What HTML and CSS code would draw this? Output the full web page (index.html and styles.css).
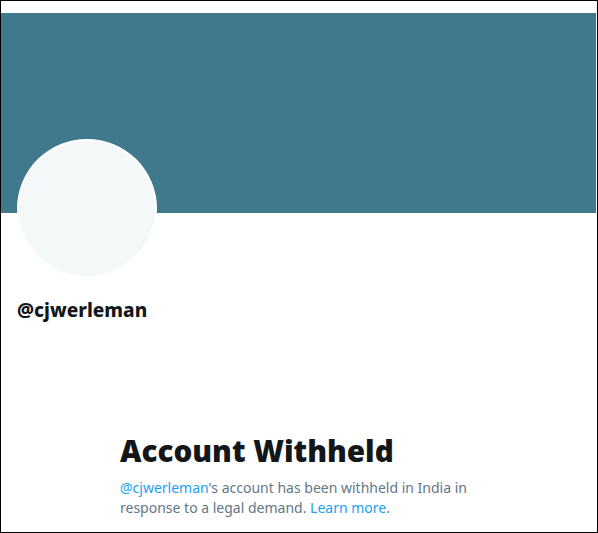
FILE: index.html
```html
<!DOCTYPE html>
<html lang="en">
<head>
    <meta charset="UTF-8">
    <meta name="viewport" content="width=device-width, initial-scale=1.0">
    <title>@cjwerleman</title>
    <link rel="stylesheet" href="styles.css">
</head>
<body>
    <div class="frame">
        <div class="topbar"></div>

        <!-- Profile header -->
        <div class="banner"></div>
        <div class="profile">
            <div class="avatar"></div>
            <div class="handle">@cjwerleman</div>
        </div>

        <!-- Withheld notice -->
        <div class="notice">
            <h1>Account Withheld</h1>
            <p><a href="#">@cjwerleman</a>'s account has been withheld in India in response to a legal demand. <a href="#">Learn more</a>.</p>
        </div>
    </div>
</body>
</html>
```

FILE: styles.css
```css
/* Base Styles */
* {
    box-sizing: border-box;
    margin: 0;
    padding: 0;
}

body {
    font-family: 'Noto Sans', 'Open Sans', sans-serif;
    background: #fff;
    color: #14171a;
}

.frame {
    width: 598px;
    height: 533px;
    border: 1px solid #000;
    overflow: hidden;
}

.topbar {
    height: 12px;
}

/* Profile header */
.banner {
    height: 200px;
    margin-right: 1px;
    background: #40798b;
}

.profile {
    padding-left: 16px;
}

.avatar {
    width: 140px;
    height: 139px;
    margin-top: -74px;
    border: 2px solid #fff;
    border-radius: 50%;
    background: #f5f8f9;
}

.handle {
    margin-top: 20px;
    font-size: 19px;
    font-weight: 800;
    line-height: 24px;
}

/* Withheld notice */
.notice {
    width: 360px;
    margin: 111px 0 0 119px;
}

.notice h1 {
    font-size: 29.6px;
    font-weight: 900;
    line-height: 36px;
}

.notice p {
    margin-top: 9px;
    font-size: 14px;
    line-height: 20px;
    color: #657786;
}

.notice a {
    color: #1da1f2;
    text-decoration: none;
}
```
